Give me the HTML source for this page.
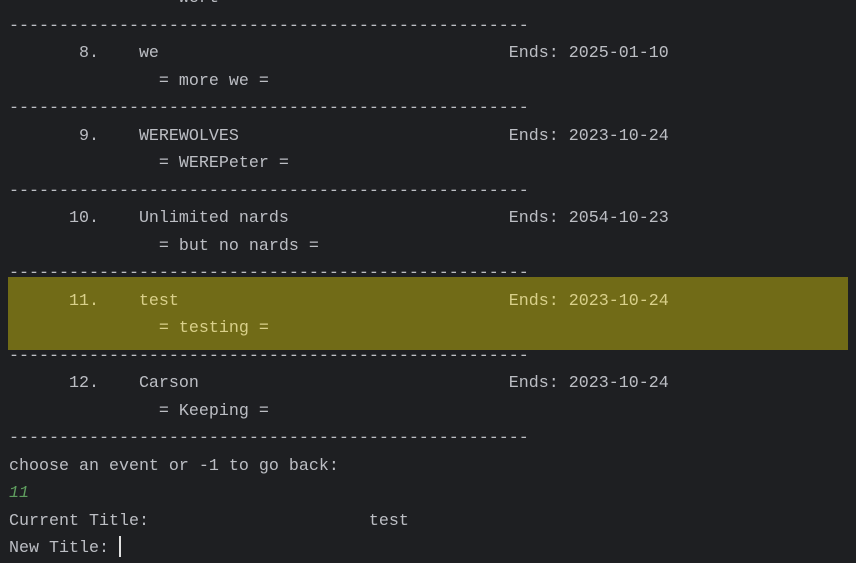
<!DOCTYPE html>
<html><head><meta charset="utf-8"><style>
html,body{margin:0;padding:0;background:#1e1f22;width:856px;height:560px;overflow:hidden}
pre{margin:0;position:absolute;left:9px;top:-14.6px;font-family:"Liberation Mono",monospace;font-size:16.67px;line-height:27.5px;color:#bcbec4;white-space:pre}
.hl{position:absolute;left:8px;top:277px;width:840px;height:73px;background:#716b17}
.y{color:#d9d08a}
.g{color:#5f9e5f;font-style:italic}
.cur{display:inline-block;width:2px;height:21px;background:#e0e0e0;vertical-align:-5px}
</style></head><body>
<div class="hl"></div>
<pre>               = wert =
----------------------------------------------------
       8.    we                                   Ends: 2025-01-10
               = more we =
----------------------------------------------------
       9.    WEREWOLVES                           Ends: 2023-10-24
               = WEREPeter =
----------------------------------------------------
      10.    Unlimited nards                      Ends: 2054-10-23
               = but no nards =
----------------------------------------------------
<span class="y">      11.    test                                 Ends: 2023-10-24</span>
<span class="y">               = testing =</span>
----------------------------------------------------
      12.    Carson                               Ends: 2023-10-24
               = Keeping =
----------------------------------------------------
choose an event or -1 to go back:
<span class="g">11</span>
Current Title:                      test
New Title: <span class="cur"></span></pre>
</body></html>
